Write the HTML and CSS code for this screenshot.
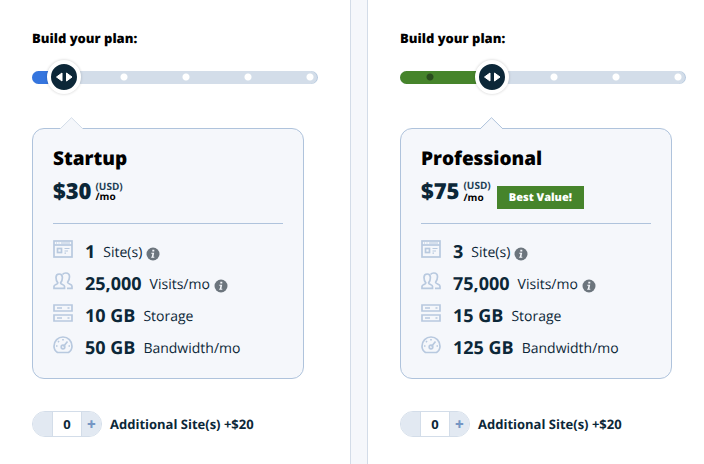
FILE: index.html
```html
<!DOCTYPE html>
<html lang="en">
<head>
    <meta charset="UTF-8">
    <meta name="viewport" content="width=device-width, initial-scale=1.0">
    <title>Build your plan</title>
    <link rel="stylesheet" href="styles.css">
</head>
<body>
    <!-- Shared icons -->
    <svg class="sprite" aria-hidden="true">
        <symbol id="icon-site" viewBox="0 0 20 18">
            <rect x="1" y="1" width="18" height="16"/>
            <path d="M1 5h18"/>
            <path d="M3 3h1M5.500 3h1M8 3h9" stroke-width="1"/>
            <rect x="4.500" y="8.500" width="4" height="4"/>
            <path d="M11.500 8.500h5M11.500 11h3.500M11.500 13.200h1.500" stroke-width="1.200"/>
        </symbol>
        <symbol id="icon-visits" viewBox="0 0 20 18">
            <path d="M1 16.300v-2.100c0-1.700 3.800-1.800 3.800-3.300C3.200 9 3 7.400 3 5.400 3 3.400 4.300 2 6.200 2s3.200 1.400 3.200 3.400c0 2-.3 3.600-1.800 5.500 0 1.500 3.900 1.600 3.900 3.300v2.100z"/>
            <path d="M9.500 2.600C10.200 1.600 11.400 1 12.800 1c2.200 0 3.700 1.500 3.700 3.800 0 2.100-.5 3.600-1.900 5.400 0 1.900 4.400 1.600 4.400 4v2.100h-5"/>
        </symbol>
        <symbol id="icon-storage" viewBox="0 0 20 18">
            <path d="M1 1h18v6H1zM1 11h18v6H1z"/>
            <path d="M4 4h5M14.500 4h2M4 14h5M14.500 14h2" stroke-width="1.300"/>
        </symbol>
        <symbol id="icon-bandwidth" viewBox="0 0 20 18">
            <path d="M4.500 16.500C2.300 15 1 12.800 1 10.200 1 5 5 1 10 1s9 4 9 9.200c0 2.600-1.300 4.800-3.500 6.300z"/>
            <path d="M10 3v1.500M5 5.200l1 1M3 10h1.500M15.500 10H17M10.500 10.500L14.500 5.500"/>
            <circle cx="10" cy="11" r="1.800"/>
        </symbol>
        <symbol id="icon-info" viewBox="0 0 14 14">
            <circle cx="7" cy="7" r="6.500" fill="#6c757d"/>
            <path d="M6.300 2.800h2v1.800h-2zM5.300 5.700h2.900l-.8 4h.9v1.100H5.200V9.700h.6l.6-2.900h-1.100z" fill="#f5f7fb"/>
        </symbol>
    </svg>

    <main class="plans">
        <section class="plan">
            <label class="plan-label" for="startupRange">Build your plan:</label>
            <div class="slider">
                <div class="slider-track">
                    <div class="slider-fill" style="width: 11%"></div>
                </div>
                <input class="slider-input" type="range" id="startupRange" min="0" max="4" value="0">
            </div>

            <div class="card">
                <svg class="pointer pointer-light" style="left: 27px" viewBox="0 0 24 12" aria-hidden="true"><path d="M0 12L11.500 .700 23 12"/></svg>
                <h2>Startup</h2>
                <div class="price-row">
                    <span class="price">$30</span>
                    <span class="unit"><span class="currency">(USD)</span>/mo</span>
                </div>
                <ul class="features">
                    <li><svg class="icon"><use href="#icon-site"/></svg><strong>1</strong><span>Site(s)</span><svg class="info"><use href="#icon-info"/></svg></li>
                    <li><svg class="icon"><use href="#icon-visits"/></svg><strong>25,000</strong><span>Visits/mo</span><svg class="info"><use href="#icon-info"/></svg></li>
                    <li><svg class="icon"><use href="#icon-storage"/></svg><strong>10 GB</strong><span>Storage</span></li>
                    <li><svg class="icon"><use href="#icon-bandwidth"/></svg><strong>50 GB</strong><span>Bandwidth/mo</span></li>
                </ul>
            </div>

            <div class="addon">
                <div class="stepper">
                    <button type="button" aria-label="Remove site"></button>
                    <input type="text" id="startupSites" value="0" inputmode="numeric">
                    <button type="button" aria-label="Add site">+</button>
                </div>
                <label for="startupSites">Additional Site(s) +$20</label>
            </div>
        </section>

        <div class="divider"></div>

        <section class="plan plan-pro">
            <label class="plan-label" for="proRange">Build your plan:</label>
            <div class="slider">
                <div class="slider-track">
                    <div class="slider-fill" style="width: 32%"></div>
                </div>
                <input class="slider-input" type="range" id="proRange" min="0" max="4" value="1">
            </div>

            <div class="card">
                <svg class="pointer" style="left: 79px" viewBox="0 0 24 12" aria-hidden="true"><path d="M0 12L11.500 .700 23 12"/></svg>
                <h2>Professional</h2>
                <div class="price-row">
                    <span class="price">$75</span>
                    <span class="unit"><span class="currency">(USD)</span>/mo</span>
                    <span class="best">Best Value!</span>
                </div>
                <ul class="features">
                    <li><svg class="icon"><use href="#icon-site"/></svg><strong>3</strong><span>Site(s)</span><svg class="info"><use href="#icon-info"/></svg></li>
                    <li><svg class="icon"><use href="#icon-visits"/></svg><strong>75,000</strong><span>Visits/mo</span><svg class="info"><use href="#icon-info"/></svg></li>
                    <li><svg class="icon"><use href="#icon-storage"/></svg><strong>15 GB</strong><span>Storage</span></li>
                    <li><svg class="icon"><use href="#icon-bandwidth"/></svg><strong>125 GB</strong><span>Bandwidth/mo</span></li>
                </ul>
            </div>

            <div class="addon">
                <div class="stepper">
                    <button type="button" aria-label="Remove site"></button>
                    <input type="text" id="proSites" value="0" inputmode="numeric">
                    <button type="button" aria-label="Add site">+</button>
                </div>
                <label for="proSites">Additional Site(s) +$20</label>
            </div>
        </section>
    </main>
</body>
</html>
```

FILE: styles.css
```css
* {
    box-sizing: border-box;
}
body {
    margin: 0;
    font-family: 'Open Sans', sans-serif;
    text-rendering: geometricPrecision;
    color: #0c2738;
    background-color: #fff;
}
.sprite {
    display: none;
}
.plans {
    display: grid;
    grid-template-columns: 25fr 18px 24fr;
    min-height: 100vh;
}
.divider {
    background-color: #f5f7fb;
    border: solid #d3dce8;
    border-width: 0 1px;
}
.plan {
    padding: 28px 32px 24px;
}
.plan-pro {
    padding-right: 18px;
}
.plan-label {
    display: block;
    font-size: 13px;
    line-height: 20px;
    font-weight: 800;
    color: #000;
}

/* Slider */
.slider {
    display: grid;
    align-items: center;
    margin-top: 12px;
}
.slider-track, .slider-input {
    grid-area: 1 / 1;
}
.slider-track {
    height: 13px;
    border-radius: 7px;
    overflow: hidden;
    background: radial-gradient(circle at 30px 6px, #fff 3px, transparent 4px) 0 0 / 62px 13px #d3dde9;
    box-shadow: inset -1px 0 0 #b4c8df;
}
.slider-fill {
    height: 100%;
    background-color: #3575de;
}
.plan-pro .slider-fill {
    background: radial-gradient(circle at 30px 6px, #2a4d1e 3px, transparent 4px) 0 0 / 62px 13px #46842b;
}
.slider-input {
    appearance: none;
    -webkit-appearance: none;
    height: 34px;
    margin: 0 -1px 0 15px;
    background: none;
    cursor: pointer;
}
.slider-input::-webkit-slider-thumb {
    -webkit-appearance: none;
    width: 34px;
    height: 34px;
    border: 4px solid #fff;
    border-radius: 50%;
    background: #0c2738 url("data:image/svg+xml,%3Csvg xmlns='http://www.w3.org/2000/svg' viewBox='0 0 26 26'%3E%3Cpath d='M11 9v8L5.500 13zM15.500 9v8L21 13z' fill='%23fff' stroke='%23fff' stroke-linejoin='round'/%3E%3C/svg%3E") center / 26px 26px no-repeat;
    box-shadow: 0 0 3px rgba(0, 0, 0, 0.2);
}

/* Plan card */
.card {
    position: relative;
    margin: 34px 0 0;
    width: calc(100% - 14px);
    padding: 15px 20px 14px;
    border: 1px solid #afc3dc;
    border-radius: 12px;
    background-color: #f5f7fb;
}
.pointer {
    position: absolute;
    top: -12px;
    width: 24px;
    height: 12px;
    fill: #f5f7fb;
    stroke: #afc3dc;
}
.pointer-light {
    stroke: #d3dde9;
}
h2 {
    margin: 0;
    font-size: 19px;
    line-height: 28px;
    font-weight: 800;
    color: #000;
}
.price-row {
    display: flex;
    align-items: center;
    height: 37px;
}
.price {
    font-size: 22px;
    line-height: 28px;
    font-weight: 800;
}
.unit {
    margin-left: 4px;
    font-size: 10px;
    line-height: 10px;
    font-weight: 700;
    color: #000;
}
.plan-pro .unit {
    line-height: 12px;
}
.currency {
    display: block;
    color: #1d4054;
}
.best {
    align-self: flex-end;
    margin-left: 6px;
    padding: 0 12px;
    font-size: 11px;
    line-height: 23px;
    font-weight: 800;
    color: #fff;
    background-color: #46842b;
}
.features {
    list-style: none;
    margin: 14px 0 0;
    padding: 12px 0 0;
    border-top: 1px solid #afc3dc;
}
.features li {
    display: flex;
    align-items: center;
    height: 32px;
    font-size: 14px;
}
.features strong {
    margin: 0 8px 0 12px;
    font-size: 18px;
    line-height: 24px;
    font-weight: 700;
}
.icon {
    width: 20px;
    height: 18px;
    margin-bottom: 6px;
    fill: none;
    stroke: #b8c9df;
    stroke-width: 1.700;
}
.info {
    width: 14px;
    height: 14px;
    margin: 4px 0 0 4px;
}

/* Extra sites */
.addon {
    display: flex;
    align-items: center;
    gap: 8px;
    margin-top: 32px;
    font-size: 13px;
    line-height: 16px;
    font-weight: 700;
}
.stepper {
    display: flex;
    height: 26px;
    border: 1px solid #d3dde9;
    border-radius: 13px;
    overflow: hidden;
}
.stepper button, .stepper input {
    border: 0;
    padding: 0;
    font: inherit;
    text-align: center;
}
.stepper button {
    width: 19px;
    font-size: 15px;
    line-height: 22px;
    font-weight: 800;
    color: #7596c4;
    background-color: #e2e9f2;
}
.stepper input {
    width: 30px;
    border: solid #d3dde9;
    border-width: 0 1px;
    font-size: 13px;
    color: #0c2738;
}
```
